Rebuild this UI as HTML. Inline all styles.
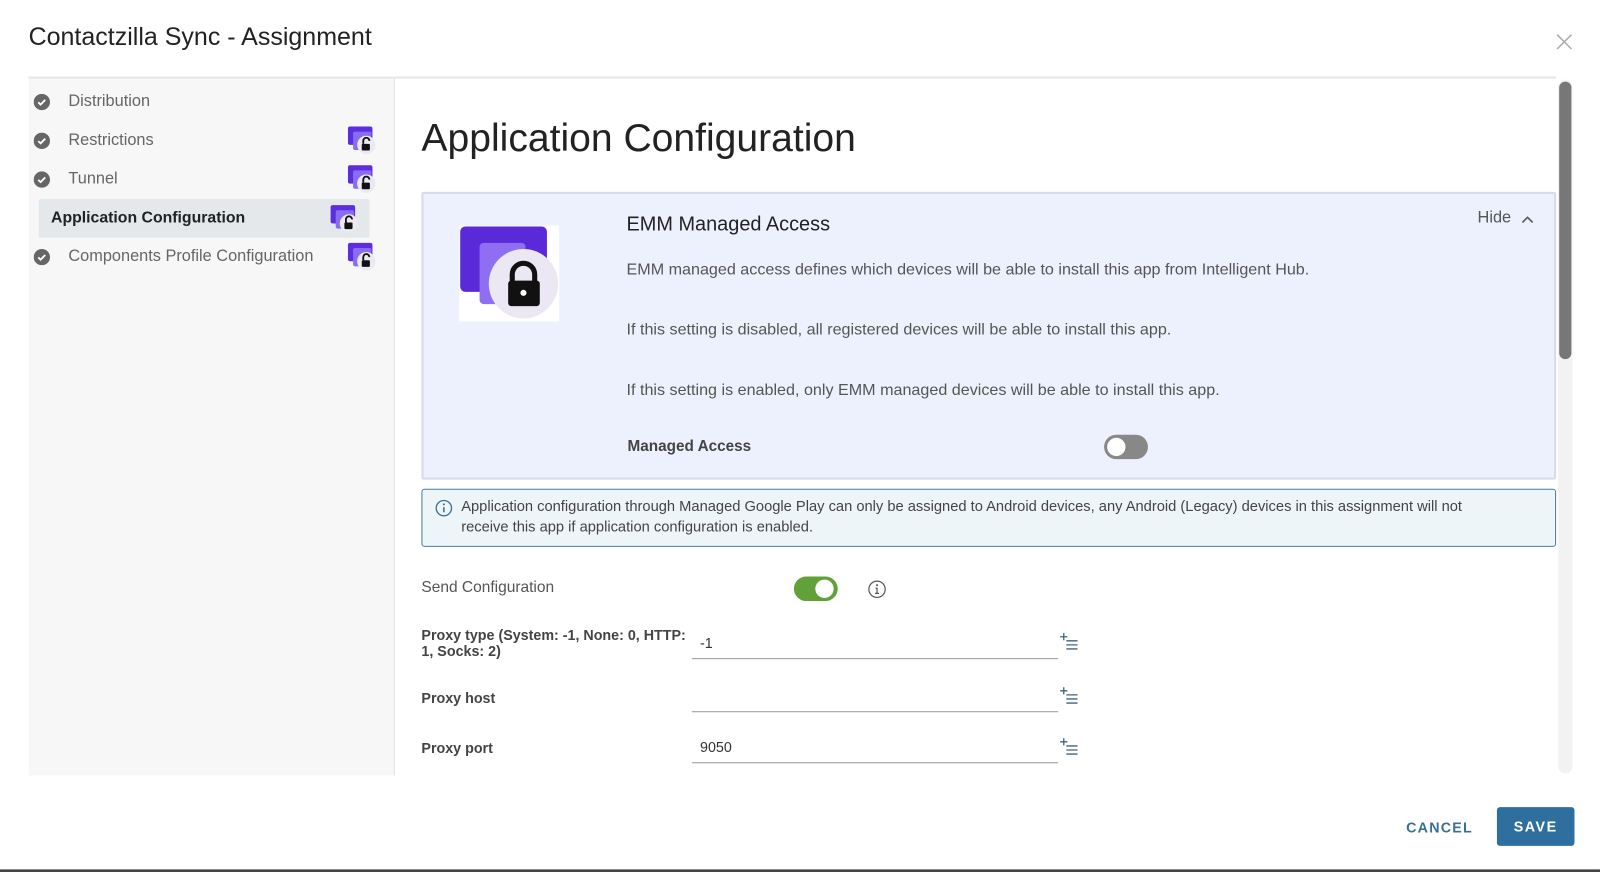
<!DOCTYPE html>
<html><head><meta charset="utf-8"><style>
*{margin:0;padding:0;box-sizing:border-box}
body{width:1600px;height:872px;background:#fff;font-family:"Liberation Sans",sans-serif;position:relative;overflow:hidden;color:#333}
#w{position:absolute;left:0;top:0;width:1568px;height:855px;transform:scale(1.0204);transform-origin:0 0}
.a{position:absolute}
.title{left:28px;top:23px;font-size:24.5px;color:#222}
.side{left:28px;top:77px;width:359px;height:683px;background:#f7f7f7;border-right:1px solid #e3e3e3}
.hr{left:28px;top:75px;width:1497px;height:2px;background:#e6e6e6}
.nav{font-size:16px;color:#666}
.chk{width:16px;height:16px}
.sel{left:38px;top:195px;width:324px;height:38px;background:#e4e8eb;border-radius:2px}
.h1{left:413px;top:114px;font-size:38.3px;color:#222}
.card{left:413px;top:188px;width:1112px;height:282px;background:#edf1fd;border:2px solid #d5dbe8;border-radius:2px}
.t{font-size:16px;color:#555}
.info{left:413px;top:479px;width:1112px;height:57px;background:#eef5f9;border:1px solid #4a7c9c;border-radius:3px}
.lbl{font-size:14px;font-weight:bold;color:#444}
.line{height:1px;background:#999;width:359px;left:678px}
</style></head><body><div id="w">
<div class="a title">Contactzilla Sync - Assignment</div>
<svg class="a" style="left:1524px;top:32px" width="18" height="18" viewBox="0 0 18 18"><path d="M2 2L16 16M16 2L2 16" stroke="#aaa" stroke-width="1.5"/></svg>
<div class="a hr"></div>
<div class="a side"></div>
<div class="a sel"></div>
<svg width="0" height="0" style="position:absolute"><defs>
<symbol id="lk" viewBox="0 0 30 30"><rect x="1" y="2" width="24" height="18" rx="2" fill="#5b2ee0"/><rect x="6" y="7" width="18" height="18" rx="2" fill="#8a6cf2"/><circle cx="19" cy="20" r="9" fill="#ece9f5"/><path d="M16 19v-3a3 3 0 0 1 6 0" stroke="#111" stroke-width="1.8" fill="none"/><rect x="14.5" y="19" width="8" height="6.5" rx="1" fill="#111"/></symbol>
<symbol id="ck" viewBox="0 0 16 16"><circle cx="8" cy="8" r="8" fill="#666"/><path d="M4.5 8.3l2.3 2.2 4.5-4.6" stroke="#fff" stroke-width="1.8" fill="none"/></symbol>
</defs></svg>
<svg class="a chk" style="left:33px;top:92px"><use href="#ck"/></svg><div class="a nav" style="left:67px;top:91px">Distribution</div>
<svg class="a chk" style="left:33px;top:130px"><use href="#ck"/></svg><div class="a nav" style="left:67px;top:129px">Restrictions</div>
<svg class="a" style="left:340px;top:122px" width="30" height="30"><use href="#lk"/></svg>
<svg class="a chk" style="left:33px;top:168px"><use href="#ck"/></svg><div class="a nav" style="left:67px;top:167px">Tunnel</div>
<svg class="a" style="left:340px;top:160px" width="30" height="30"><use href="#lk"/></svg>
<div class="a" style="left:50px;top:205px;font-size:15.5px;font-weight:bold;color:#222">Application Configuration</div>
<svg class="a" style="left:323px;top:199px" width="30" height="30"><use href="#lk"/></svg>
<svg class="a chk" style="left:33px;top:244px"><use href="#ck"/></svg><div class="a nav" style="left:67px;top:243px">Components Profile Configuration</div>
<svg class="a" style="left:340px;top:236px" width="30" height="30"><use href="#lk"/></svg>
<div class="a h1">Application Configuration</div>
<div class="a card"></div>
<div class="a" style="left:450px;top:221px;width:98px;height:94px;background:#fff"></div>
<svg class="a" style="left:450px;top:221px" width="98" height="94" viewBox="0 0 98 94"><rect x="1" y="1" width="85" height="64" rx="5" fill="#5a2ad8"/><rect x="20" y="17" width="45" height="60" rx="4" fill="#8f6ef2"/><circle cx="63" cy="57" r="34" fill="#ebe8f3"/><path d="M52 56v-8a11 11 0 0 1 22 0v8" stroke="#111" stroke-width="5" fill="none"/><rect x="48" y="54" width="31" height="25" rx="3" fill="#111"/><circle cx="63" cy="66" r="3" fill="#fff"/></svg>
<div class="a" style="left:614px;top:209px;font-size:19.5px;color:#222">EMM Managed Access</div>
<div class="a t" style="left:1448px;top:205px">Hide</div>
<svg class="a" style="left:1490px;top:210px" width="14" height="10"><path d="M2 8L7 3L12 8" stroke="#555" stroke-width="1.6" fill="none"/></svg>
<div class="a t" style="left:614px;top:256px;font-size:15.8px">EMM managed access defines which devices will be able to install this app from Intelligent Hub.</div>
<div class="a t" style="left:614px;top:315px;font-size:15.8px">If this setting is disabled, all registered devices will be able to install this app.</div>
<div class="a t" style="left:614px;top:374px;font-size:15.8px">If this setting is enabled, only EMM managed devices will be able to install this app.</div>
<div class="a lbl" style="left:615px;top:429px;font-size:15px">Managed Access</div>
<div class="a" style="left:1082px;top:426px;width:43px;height:24px;border-radius:12px;background:#888"></div>
<div class="a" style="left:1085px;top:429px;width:18px;height:18px;border-radius:50%;background:#fff"></div>
<div class="a info"></div>
<svg class="a" style="left:426px;top:489px" width="18" height="18" viewBox="0 0 18 18"><circle cx="9" cy="9" r="7.5" stroke="#3b6f93" stroke-width="1.3" fill="none"/><circle cx="9" cy="5.3" r="1" fill="#3b6f93"/><path d="M9 8v5" stroke="#3b6f93" stroke-width="1.5"/></svg>
<div class="a" style="left:452px;top:488px;width:1020px;font-size:14.4px;line-height:19.5px;color:#444">Application configuration through Managed Google Play can only be assigned to Android devices, any Android (Legacy) devices in this assignment will not receive this app if application configuration is enabled.</div>
<div class="a t" style="left:413px;top:567px;font-size:15.2px">Send Configuration</div>
<div class="a" style="left:778px;top:565px;width:43px;height:24px;border-radius:12px;background:#62a03a"></div>
<div class="a" style="left:799px;top:568px;width:18px;height:18px;border-radius:50%;background:#fff"></div>
<svg class="a" style="left:850px;top:568px" width="19" height="19" viewBox="0 0 19 19"><circle cx="9.5" cy="9.5" r="8" stroke="#555" stroke-width="1.2" fill="none"/><circle cx="9.5" cy="5.5" r="1" fill="#555"/><path d="M8 8.5h1.5v5M7.5 13.5h4" stroke="#555" stroke-width="1.2" fill="none"/></svg>
<div class="a lbl" style="left:413px;top:614px;line-height:16px;width:265px">Proxy type (System: -1, None: 0, HTTP: 1, Socks: 2)</div>
<div class="a" style="left:686px;top:622px;font-size:14px">-1</div>
<div class="a line" style="top:645px"></div>
<div class="a lbl" style="left:413px;top:676px">Proxy host</div>
<div class="a line" style="top:697px"></div>
<div class="a lbl" style="left:413px;top:725px">Proxy port</div>
<div class="a" style="left:686px;top:724px;font-size:14px">9050</div>
<div class="a line" style="top:747px"></div>
<svg class="a" style="left:1038px;top:620px" width="20" height="18"><path d="M1 4h7M4.5 0.5v7M7 8h11M7 12h11M7 16h11" stroke="#3e6480" stroke-width="1.3"/></svg>
<svg class="a" style="left:1038px;top:673px" width="20" height="18"><path d="M1 4h7M4.5 0.5v7M7 8h11M7 12h11M7 16h11" stroke="#3e6480" stroke-width="1.3"/></svg>
<svg class="a" style="left:1038px;top:723px" width="20" height="18"><path d="M1 4h7M4.5 0.5v7M7 8h11M7 12h11M7 16h11" stroke="#3e6480" stroke-width="1.3"/></svg>
<div class="a" style="left:1527px;top:78px;width:14px;height:680px;background:#f2f2f2;border-radius:7px"></div>
<div class="a" style="left:1528px;top:80px;width:12px;height:272px;background:#777;border-radius:6px"></div>
<div class="a" style="left:1378px;top:803px;font-size:14px;font-weight:bold;letter-spacing:1.2px;color:#3b6f93">CANCEL</div>
<div class="a" style="left:1467px;top:791px;width:76px;height:38px;background:#2f6f9f;border-radius:3px;color:#fff;font-size:14px;font-weight:bold;letter-spacing:1.5px;text-align:center;line-height:38px">SAVE</div>
<div class="a" style="left:0;top:852px;width:1568px;height:3px;background:#444"></div>
</div></body></html>
